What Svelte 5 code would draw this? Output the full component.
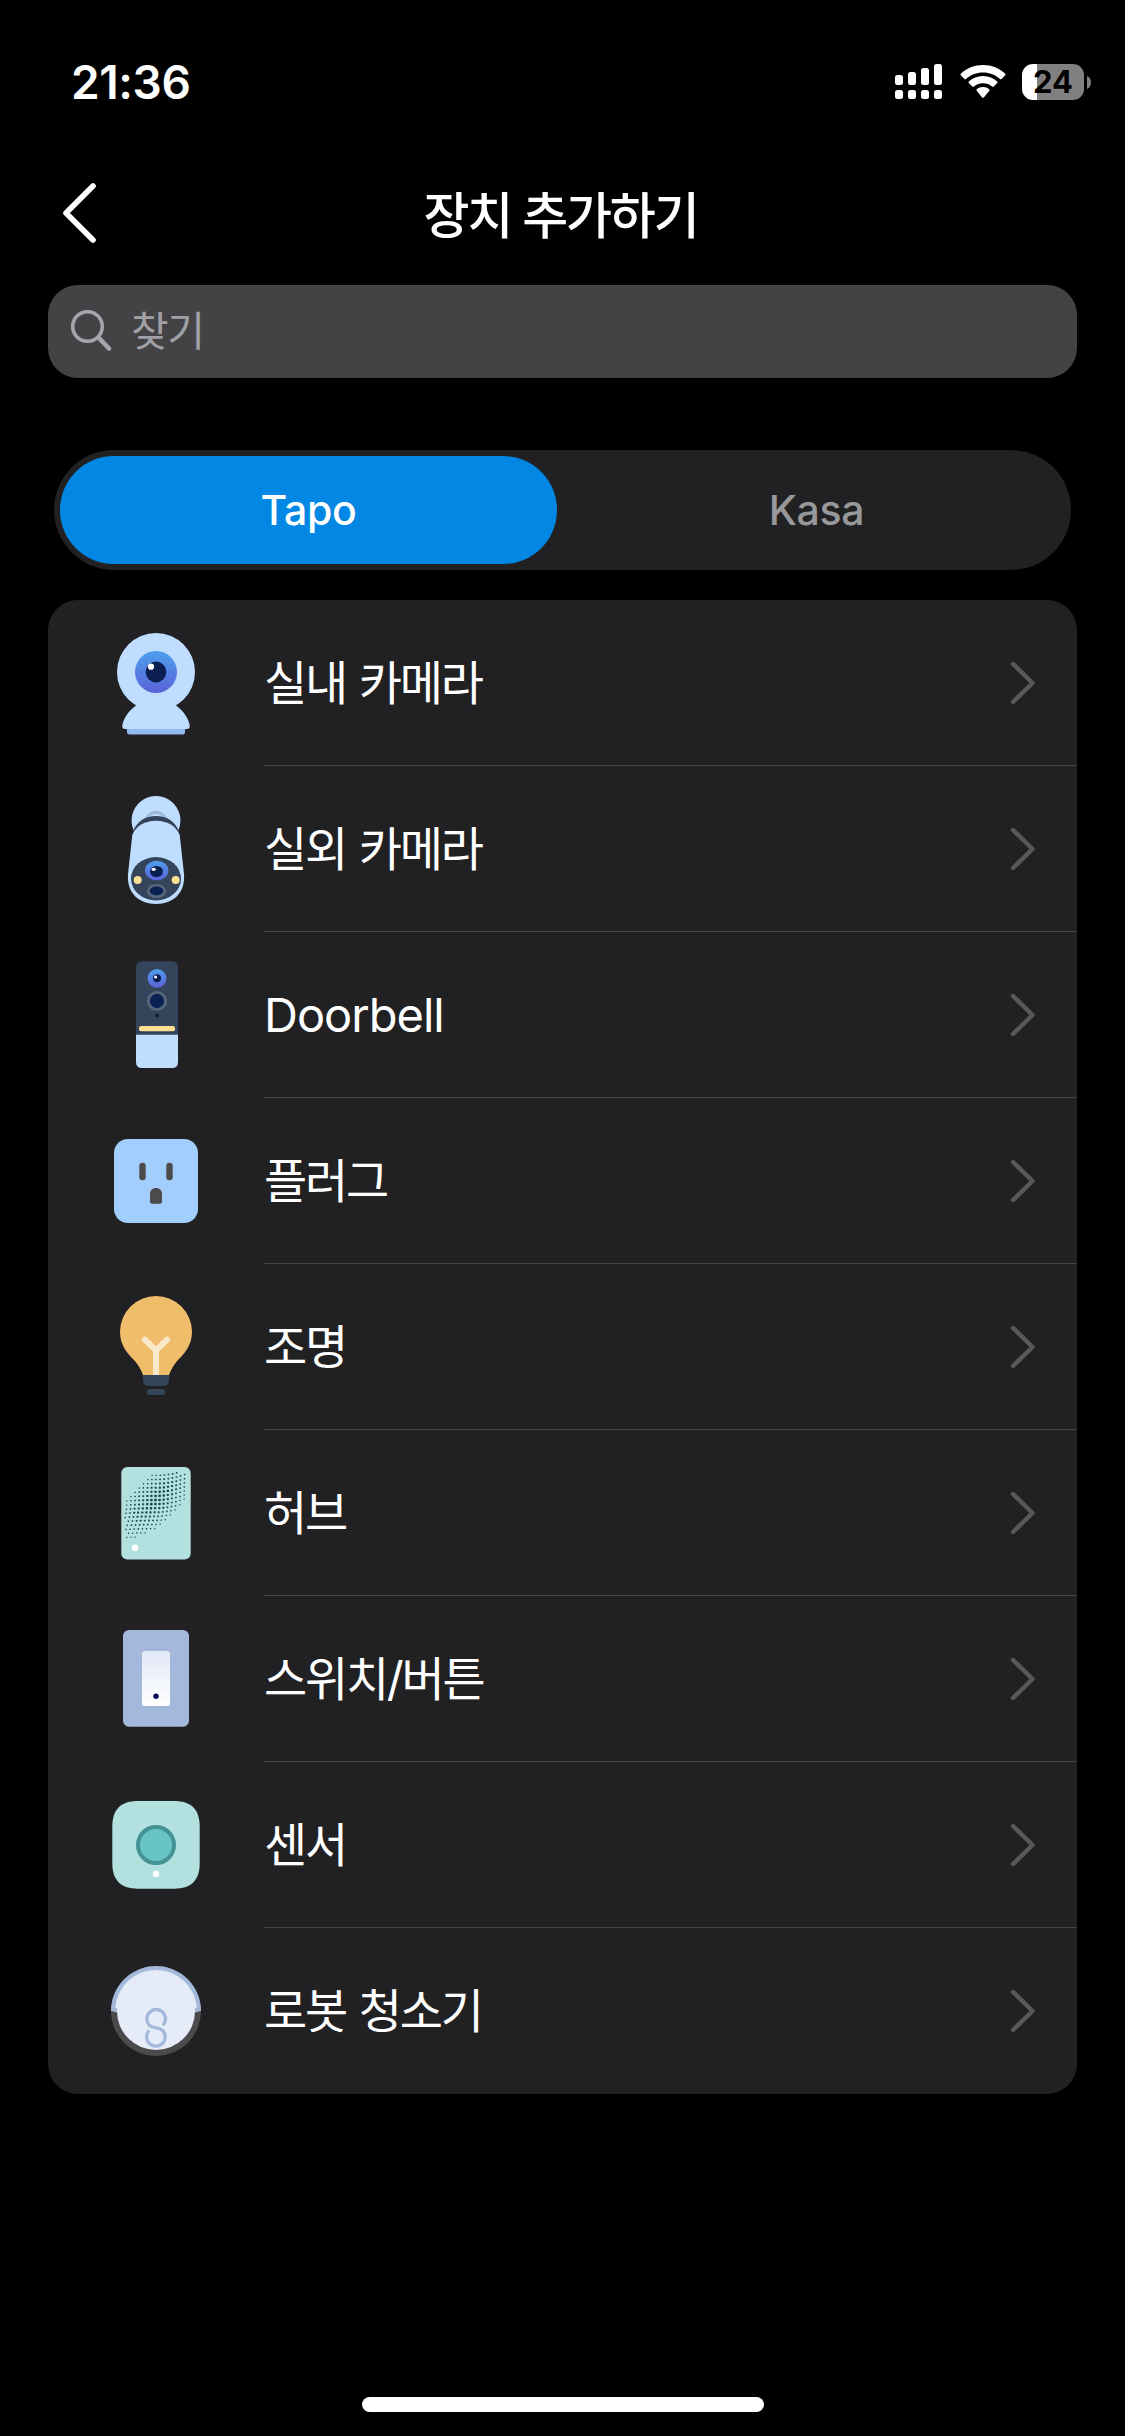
<script>
  const devices = [
    { icon: "indoor", name: "실내 카메라" },
    { icon: "outdoor", name: "실외 카메라" },
    { icon: "doorbell", name: "Doorbell", latin: true },
    { icon: "plug", name: "플러그" },
    { icon: "bulb", name: "조명" },
    { icon: "hub", name: "허브" },
    { icon: "switch", name: "스위치/버튼" },
    { icon: "sensor", name: "센서" },
    { icon: "vacuum", name: "로봇 청소기" },
  ];

  const tabs = ["Tapo", "Kasa"];
  let activeTab = $state("Tapo");
  let query = $state("");

  // Speaker holes of the hub: a bent grid cut to a tilted ellipse
  function speakerHoles() {
    const holes = [];
    for (let u = -14; u <= 14; u++) {
      for (let v = -14; v <= 14; v++) {
        const x = 4.1 * u - 0.1 * v * Math.abs(v) * (v > 0 ? 1 : 0.2);
        const y = 4.1 * v - 0.1 * u * Math.abs(u) * (u > 0 ? 1 : 0.2);
        const along = (x - y) / Math.SQRT2 / 49;
        const across = (x + y) / Math.SQRT2 / 22;
        const d = along * along + across * across;
        const px = 53.5 + x;
        const py = 47 + y;
        if (d > 1 || px < 23 || px > 86 || py < 19) continue;
        const size = 2.7 - 1.5 * Math.sqrt(d);
        holes.push({ x: px - size / 2, y: py - size / 2, size });
      }
    }
    return holes;
  }

  const holes = speakerHoles();
</script>

<div class="screen">
  <header class="status">
    <span class="time">21:36</span>
    <div class="indicators">
      <svg width="47" height="36" viewBox="0 0 47 36" fill="#fff">
        <rect x="0" y="11" width="8" height="10" rx="2.5" />
        <rect x="13" y="8" width="8" height="13" rx="2.5" />
        <rect x="26" y="4" width="8" height="17" rx="2.5" />
        <rect x="39" y="0" width="8" height="21" rx="2.5" />
        <rect x="0" y="26" width="8" height="9" rx="2.5" />
        <rect x="13" y="26" width="8" height="9" rx="2.5" />
        <rect x="26" y="26" width="8" height="9" rx="2.5" />
        <rect x="39" y="26" width="8" height="9" rx="2.5" />
      </svg>
      <svg class="wifi" width="46" height="36" viewBox="0 0 46 36" fill="#fff">
        <path d="M23 1C14.500 1 6.500 4.300.8 9.700c-.5.5-.5 1.100 0 1.600l3.600 3.600c.5.500 1.100.5 1.600 0C10.600 10.900 16.500 8.600 23 8.600s12.400 2.300 17 6.300c.5.500 1.100.5 1.600 0l3.600-3.600c.5-.5.5-1.100 0-1.600C39.500 4.300 31.500 1 23 1z" />
        <path d="M23 12c-5.500 0-10.500 2.100-14.200 5.500-.5.500-.5 1.100 0 1.600l3.500 3.500c.4.400 1 .4 1.500 0 2.500-2.100 5.700-3.300 9.200-3.300s6.700 1.200 9.200 3.300c.5.400 1.100.4 1.500 0l3.500-3.500c.5-.5.5-1.100 0-1.600C33.500 14.100 28.500 12 23 12z" />
        <path d="M23 23c-2.400 0-4.600.9-6.200 2.300-.5.500-.5 1.100 0 1.600l5.400 6.500c.5.500 1.100.5 1.600 0l5.400-6.500c.5-.5.5-1.100 0-1.600C27.600 23.900 25.400 23 23 23z" />
      </svg>
      <div class="battery">
        <div class="cell"><span>24</span></div>
        <svg width="4" height="13" viewBox="0 0 4 13" fill="#808080">
          <path d="M0 0C2.600 1.100 4 3.600 4 6.500S2.600 11.900 0 13z" />
        </svg>
      </div>
    </div>
  </header>

  <nav class="topbar">
    <button class="back" aria-label="뒤로">
      <svg width="36" height="62" viewBox="0 0 36 62">
        <path d="M32 4L5 31L32 58" fill="none" stroke="#fff" stroke-width="5.600" stroke-linecap="round" stroke-linejoin="round" />
      </svg>
    </button>
    <h1>장치 추가하기</h1>
  </nav>

  <label class="search">
    <svg width="42" height="42" viewBox="0 0 42 42" fill="none" stroke="#a5a5ad" stroke-linecap="round">
      <circle cx="16.500" cy="16.500" r="14.800" stroke-width="3.600" />
      <path d="M27.500 27.500L38 38.500" stroke-width="4.600" />
    </svg>
    <input type="text" placeholder="찾기" bind:value={query} />
  </label>

  <div class="tabs">
    {#each tabs as tab}
      <button class:active={activeTab === tab} onclick={() => (activeTab = tab)}>{tab}</button>
    {/each}
  </div>

  <ul class="devices">
    {#each devices as device}
      <li>
        <svg class="icon" width="108" height="120" viewBox="0 0 108 120">
          {#if device.icon === "indoor"}
            <path d="M25 105H83V109Q83 111.500 80.500 111.500H27.500Q25 111.500 25 109z" fill="#92b9ef" />
            <circle cx="54" cy="49" r="39" fill="#bfdeff" />
            <path d="M34 82.500C27 87.500 21.500 95 20.300 102.500Q20 106 23 106H85Q88 106 87.700 102.500C86.500 95 81 87.500 74 82.500L54 76z" fill="#bfdeff" />
            <circle cx="54" cy="49" r="21" fill="url(#iris)" />
            <circle cx="54" cy="49" r="10.400" fill="#0b1e52" />
            <circle cx="49" cy="43.700" r="3.100" fill="#fff" />
          {:else if device.icon === "outdoor"}
            <path d="M32 42A24.400 24.400 0 1 1 76 42z" fill="#bfdeff" />
            <ellipse cx="54" cy="33" rx="10.500" ry="9.500" fill="none" stroke="#9fb9d6" stroke-width="3" />
            <path d="M31 42.500C35 32 43.500 27 54 27S73 32 77 42.500L78 50H30z" fill="#34445a" />
            <path d="M30.300 46C34.500 36.500 43 31.800 54 31.800S73.500 36.500 77.700 46L82 85C83.500 104 71 115 54 115S24.500 104 26 85z" fill="#bfdeff" />
            <ellipse cx="54" cy="89.700" rx="25" ry="21.700" fill="#34445a" />
            <ellipse cx="54.700" cy="81.500" rx="11.700" ry="9.800" fill="url(#iris)" />
            <ellipse cx="54.500" cy="82.500" rx="6.500" ry="5.500" fill="#0b1e52" />
            <ellipse cx="51.700" cy="80.300" rx="2.100" ry="1.600" fill="#fff" />
            <circle cx="35.700" cy="91" r="4" fill="#fee092" />
            <circle cx="73.700" cy="91" r="4" fill="#fee092" />
            <ellipse cx="54.500" cy="102" rx="8.200" ry="5.800" fill="#0a2253" stroke="#56677c" stroke-width="2.600" />
          {:else if device.icon === "doorbell"}
            <path d="M34 80V12.300Q34 6.300 40 6.300H70Q76 6.300 76 12.300V80z" fill="#34445a" />
            <path d="M34 79.700H76V107Q76 113 70 113H40Q34 113 34 107z" fill="#bfdeff" />
            <circle cx="55" cy="23.300" r="9.400" fill="url(#iris)" />
            <circle cx="55" cy="23.300" r="4" fill="#0b1e52" />
            <circle cx="53.600" cy="22" r="1.500" fill="#fff" />
            <circle cx="55" cy="46" r="8.600" fill="#0a2253" stroke="#56677c" stroke-width="2.900" />
            <circle cx="55" cy="60.500" r="1.800" fill="#111a26" />
            <rect x="37" y="71" width="36" height="5.200" rx="2" fill="#fee092" />
          {:else if device.icon === "plug"}
            <rect x="12" y="18" width="84" height="84" rx="14" fill="#a1cefc" />
            <rect x="37.300" y="41.700" width="6.400" height="17.600" rx="3" fill="#4b4b4b" />
            <rect x="64.300" y="41.700" width="6.400" height="17.600" rx="3" fill="#4b4b4b" />
            <path d="M48 73C48 69.500 50.500 67 54 67S60 69.500 60 73V80.500Q60 82.700 57.800 82.700H50.200Q48 82.700 48 80.500z" fill="#4b4b4b" />
          {:else if device.icon === "bulb"}
            <path d="M41 88C39 82.500 36.500 78.500 32.500 73.500C26 67 18 58.500 18 45A36 36 0 0 1 90 45C90 58.500 82 67 75.500 73.500C71.500 78.500 69 82.500 67 88z" fill="#f0be6b" />
            <path d="M43 52.700L54 63.500L65 52.700M54 63.500V85" fill="none" stroke="#fae8ca" stroke-width="6" stroke-linecap="round" />
            <path d="M51 80H57V88H51z" fill="#fae8ca" />
            <path d="M41 88H67V93Q67 99 61 99H47Q41 99 41 93z" fill="#34445a" />
            <rect x="45" y="102" width="18" height="6" rx="3" fill="#34445a" />
          {:else if device.icon === "hub"}
            <rect x="19.300" y="14" width="69.400" height="92.400" rx="6" fill="#b2e1e0" />
            {#each holes as hole}
              <rect x={hole.x} y={hole.y} width={hole.size} height={hole.size} rx={hole.size / 4} fill="#1c4a52" />
            {/each}
            <circle cx="33" cy="94.700" r="3.200" fill="#fff" />
          {:else if device.icon === "switch"}
            <rect x="21" y="11" width="66" height="96.700" rx="6" fill="#a3b8da" />
            <rect x="40" y="32" width="28" height="55" rx="2.500" fill="url(#rocker)" />
            <circle cx="54" cy="77.300" r="2.700" fill="#0b0b5c" />
          {:else if device.icon === "sensor"}
            <path d="M36 16H72C89 16 97.700 24 97.700 42V78C97.700 95.500 89 103.700 72 103.700H36C19 103.700 10.300 95.500 10.300 78V42C10.300 24 19 16 36 16z" fill="#b2e1e0" />
            <circle cx="54" cy="60" r="18" fill="#68c4c5" stroke="#439395" stroke-width="4" />
            <circle cx="54" cy="89" r="3.200" fill="#fff" />
          {:else if device.icon === "vacuum"}
            <circle cx="54" cy="60" r="45" fill="#4b4b4b" />
            <path d="M9 59A45 45 0 0 1 99 59L93 60.500H15z" fill="#a3b8da" transform="translate(0 1)" />
            <circle cx="54" cy="60" r="39" fill="#e5ecf8" />
            <path d="M13.150 56.500A41 41 0 0 1 94.850 56.500L92 58H16z" fill="#e5ecf8" />
            <path d="M61.700 73.200A9.300 9.300 0 1 0 47.500 74.300C49.500 76.300 52 76.500 54 76.800C56.500 77.100 58.700 77.700 60.500 79.300A9.300 9.300 0 1 1 46.300 80.500" fill="none" stroke="#a3b8da" stroke-width="3.300" stroke-linecap="round" />
          {/if}
        </svg>
        <div class="row">
          <span class="name" class:latin={device.latin}>{device.name}</span>
          <svg width="26" height="44" viewBox="0 0 26 44">
            <path d="M3 3L22.500 22L3 41" fill="none" stroke="#58585a" stroke-width="4.400" stroke-linecap="round" stroke-linejoin="round" />
          </svg>
        </div>
      </li>
    {/each}
  </ul>

  <div class="home"></div>

  <svg class="defs" width="0" height="0">
    <defs>
      <linearGradient id="iris" x1="0" y1="0" x2="0" y2="1">
        <stop offset="0" stop-color="#4e9fee" />
        <stop offset="1" stop-color="#5a62d8" />
      </linearGradient>
      <linearGradient id="rocker" x1="0" y1="0" x2="0" y2="1">
        <stop offset="0" stop-color="#e2e8f7" />
        <stop offset="1" stop-color="#ffffff" />
      </linearGradient>
    </defs>
  </svg>
</div>

<style>
  :global(body) {
    background: #000;
  }

  .screen {
    display: flex;
    flex-direction: column;
    box-sizing: border-box;
    width: 1125px;
    height: 2436px;
    padding: 0 48px 24px;
    background: #000;
    color: #fff;
    font-family: Inter, "Noto Sans CJK KR", sans-serif;
  }

  button {
    border: none;
    padding: 0;
    background: none;
    color: inherit;
    font-family: inherit;
    cursor: pointer;
  }

  .status {
    display: flex;
    justify-content: space-between;
    align-items: center;
    height: 36px;
    padding: 64px 0 0 23px;
    margin-right: -14px;
  }

  .time {
    font-size: 46px;
    font-weight: 600;
    letter-spacing: -0.4px;
  }

  .indicators {
    display: flex;
    align-items: center;
  }

  .wifi {
    margin: 0 16px 0 18px;
  }

  .battery {
    display: flex;
    align-items: center;
    gap: 3px;
  }

  .cell {
    display: flex;
    justify-content: center;
    align-items: center;
    width: 62px;
    height: 36px;
    border-radius: 11px;
    background: linear-gradient(to right, #fff 15px, #808080 15px);
    color: #000;
    font-size: 31px;
    font-weight: 700;
  }

  .cell span {
    padding-bottom: 1px;
  }

  .topbar {
    display: grid;
    grid-template-columns: 60px 1fr 60px;
    align-items: center;
    height: 90px;
    margin-top: 68px;
  }

  .back {
    display: flex;
    padding-left: 13px;
  }

  h1 {
    margin: 0;
    padding: 0 4px 2px 0;
    text-align: center;
    font-size: 50px;
    font-weight: 500;
    letter-spacing: -2.2px;
  }

  .search {
    display: flex;
    align-items: center;
    gap: 18px;
    box-sizing: border-box;
    height: 93px;
    margin-top: 27px;
    padding: 0 23px 2px;
    border-radius: 30px;
    background: #434345;
  }

  .search input {
    flex: 1;
    border: none;
    outline: none;
    padding: 0;
    background: none;
    color: #fff;
    font-family: inherit;
    font-size: 41px;
    letter-spacing: -1.5px;
  }

  .search input::placeholder {
    color: #a0a0a6;
    opacity: 1;
  }

  .tabs {
    display: grid;
    grid-template-columns: 1fr 1fr;
    gap: 11px;
    box-sizing: border-box;
    height: 120px;
    margin: 72px 6px 0;
    padding: 6px;
    border-radius: 60px;
    background: #212123;
  }

  .tabs button {
    border-radius: 54px;
    color: #98989a;
    font-size: 41px;
    font-weight: 500;
    letter-spacing: -0.3px;
  }

  .tabs button.active {
    background: #0288e4;
    color: #fff;
  }

  .devices {
    margin: 30px 0 0;
    padding: 0;
    border-radius: 30px;
    background: #212123;
    list-style: none;
  }

  li {
    display: flex;
    align-items: center;
    height: 166px;
    padding-left: 54px;
  }

  .icon {
    flex: none;
    margin-right: 54px;
  }

  .row {
    display: flex;
    flex: 1;
    justify-content: space-between;
    align-items: center;
    box-sizing: border-box;
    height: 166px;
    padding-right: 41px;
    border-bottom: 1px solid #434346;
    font-size: 47px;
  }

  li:last-child .row {
    border-bottom-color: transparent;
  }

  .name {
    padding-bottom: 6px;
    letter-spacing: -2.3px;
    word-spacing: 2px;
  }

  .name.latin {
    padding-bottom: 0;
    letter-spacing: -1px;
  }

  .home {
    align-self: center;
    width: 402px;
    height: 15px;
    margin-top: auto;
    border-radius: 8px;
    background: #fff;
  }

  .defs {
    position: absolute;
  }
</style>
